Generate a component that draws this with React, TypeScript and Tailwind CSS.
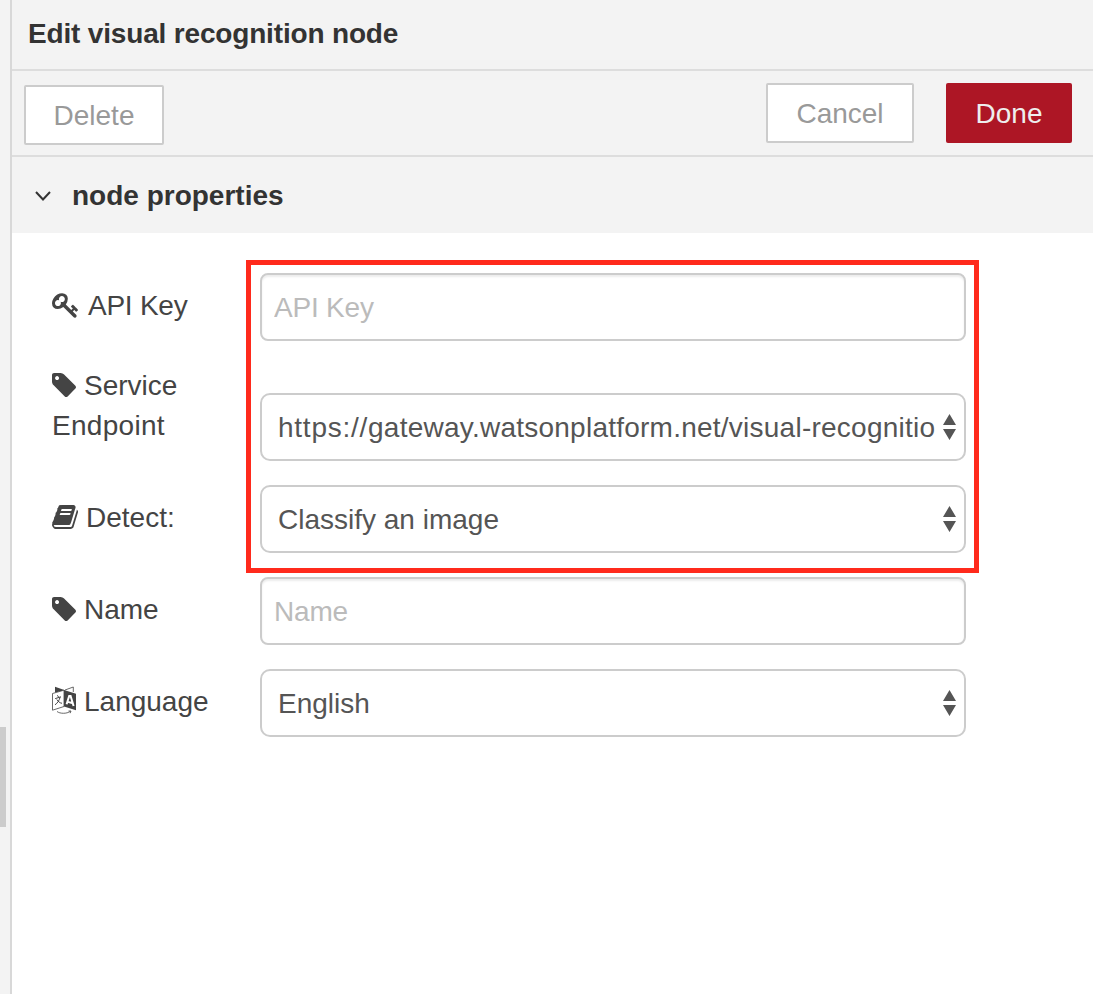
import type { ReactNode } from "react";

const KEY =
  "M832 512q0-80-56-136t-136-56-136 56-56 136q0 42 19 83-41-19-83-19-80 0-136 56t-56 136 56 136 136 56 136-56 56-136q0-42-19-83 41 19 83 19 80 0 136-56t56-136zm851 704q0 17-49 66t-66 49q-9 0-28.5-16t-36.5-33-38.5-40-24.5-26l-96 96 220 220q28 28 28 68 0 42-39 81t-81 39q-40 0-68-28l-671-671q-176 131-365 131-163 0-265.5-102.5t-102.5-265.5q0-160 95-313t248-248 313-95q163 0 265.5 102.5t102.5 265.5q0 189-131 365l355 355 96-96q-3-3-26-24.5t-40-38.5-33-36.5-16-28.5q0-17 49-66t66-49q13 0 23 10 6 6 46 44.5t82 79.5 86.5 86 73 78 28.5 41z";
const TAG =
  "M576 448q0-53-37.5-90.5t-90.5-37.5-90.5 37.5-37.5 90.5 37.5 90.5 90.5 37.5 90.5-37.5 37.5-90.5zm1067 576q0 53-37 90l-491 492q-39 37-91 37-53 0-90-37l-715-716q-38-37-64.5-101t-26.5-117v-416q0-52 38-90t90-38h416q53 0 117 26.5t102 64.5l715 714q37 39 37 91z";
const BOOK =
  "M1703 478q40 57 18 129l-275 906q-19 64-76.5 107.5t-122.5 43.5h-923q-77 0-148.5-53.5t-99.5-131.5q-24-67-2-127 0-4 3-27t4-37q1-8-3-21.5t-3-19.5q2-11 8-21t16.5-23.5 16.5-23.5q23-38 45-91.5t30-91.5q3-10 .5-30t-.5-28q3-11 17-28t17-23q21-36 42-92t25-90q1-9-2.5-32t.5-28q4-13 22-30.5t22-22.5q19-26 42.5-84.5t27.5-96.5q1-8-3-25.5t-2-26.5q2-8 9-18t18-23 17-21q8-12 16.5-30.5t15-35 16-36 19.5-32 26.5-23.5 36-11.5 47.5 5.5l-1 3q38-9 51-9h761q74 0 114 56t18 130l-274 906q-36 119-71.5 153.5t-128.5 34.5h-869q-27 0-38 15-11 16-1 43 24 70 144 70h923q29 0 56-15.5t35-41.5l300-987q7-22 5-57 38 15 59 43zm-1064 2q-4 13 2 22.5t20 9.5h608q13 0 25.5-9.5t16.5-22.5l21-64q4-13-2-22.5t-20-9.5h-608q-13 0-25.5 9.5t-16.5 22.5zm-83 256q-4 13 2 22.5t20 9.5h608q13 0 25.5-9.5t16.5-22.5l21-64q4-13-2-22.5t-20-9.5h-608q-13 0-25.5 9.5t-16.5 22.5z";

function Glyph({ path, box, className }: { path: string; box: string; className: string }) {
  return (
    <svg viewBox={box} className={`inline-block shrink-0 fill-current ${className}`}>
      <path d={path} />
    </svg>
  );
}

function LanguageGlyph() {
  return (
    <svg viewBox="0 0 24 28" className="mr-2 inline-block h-7 w-6 shrink-0 align-[-3px]">
      <path d="M3 .8 L13 4.3 L3 6.5Z" fill="#444" />
      <path d="M13 4 L21.3 1 V6" fill="none" stroke="#444" strokeWidth=".8" />
      <path d="M.5 7.5 L12 4.2 V20.5 L.5 24.2Z" fill="#fff" stroke="#444" strokeWidth=".8" />
      <path d="M12 4 L24 7.8 V24.3 L12 20.5Z" fill="#444" />
      <path d="M3.2 12.6 L9 10.8 M5.4 9.3 L6.5 11 M8 11.3 C7.5 14 5.5 17.2 3 18.8 M4.8 13.5 C6 15.5 8 17 10 17.3" fill="none" stroke="#444" strokeWidth="1" />
      <path d="M14.6 18.2 L17.2 10 H18.6 L21.6 20 M15.8 15.9 L20 17" fill="none" stroke="#fff" strokeWidth="2" />
      <path d="M5 25.5 C8 27.8 14.5 28 18.5 25.3 M16.5 25 L19 25 L18.2 27.2" fill="none" stroke="#444" strokeWidth=".8" />
    </svg>
  );
}

function Row({ label, children }: { label: ReactNode; children: ReactNode }) {
  return (
    <div className="flex items-end">
      <div className="w-[208px] shrink-0 pb-[15px] pt-px text-[#444]">{label}</div>
      {children}
    </div>
  );
}

function TextInput({ placeholder }: { placeholder: string }) {
  return (
    <input
      type="text"
      placeholder={placeholder}
      className="block h-[68px] w-[706px] rounded-lg border-2 border-[#ccc] bg-white px-3 pt-0.5 tracking-[-0.2px] text-[#555] shadow-[inset_0_2px_2px_rgba(0,0,0,0.075)] outline-none placeholder:text-[#bbb]"
    />
  );
}

function SelectBox({ children }: { children: ReactNode }) {
  return (
    <div className="flex h-[68px] w-[706px] items-center rounded-[10px] border-2 border-[#ccc] bg-white pl-4 pr-2 text-[#555]">
      <div className="w-[657px] shrink-0 whitespace-nowrap pt-0.5">{children}</div>
      <svg viewBox="0 0 13 26" className="ml-2 h-[26px] w-[13px] shrink-0 fill-[#555]">
        <path d="M6.5 0L13 11H0zM0 15H13L6.5 26z" />
      </svg>
    </div>
  );
}

export default function App() {
  return (
    <div className="flex h-[994px] w-[1093px] overflow-hidden bg-white font-['Liberation_Sans',Arial,sans-serif] text-[28px] leading-10">
      <div className="flex w-3 shrink-0 flex-col border-r-2 border-[#d8d8d8] bg-[#f3f3f3] pt-[727px]">
        <div className="h-[100px] w-1.5 bg-[#ccc]" />
      </div>
      <div className="flex min-w-0 flex-1 flex-col">
        <div className="h-[71px] border-b-2 border-[#ddd] bg-[#f3f3f3] pl-4 pt-3.5 font-bold tracking-[-0.17px] text-[#333]">
          Edit visual recognition node
        </div>
        <div className="flex h-[86px] items-start border-b-2 border-[#ddd] bg-[#f3f3f3] pl-3 pr-[21px] pt-3">
          <button className="mt-0.5 h-[60px] w-[140px] rounded-xs border-2 border-[#ccc] bg-white pt-0.5 text-[#999]">Delete</button>
          <button className="ml-auto h-[60px] w-[148px] rounded-xs border-2 border-[#ccc] bg-white pt-0.5 text-[#999]">Cancel</button>
          <button className="ml-8 h-[60px] w-[126px] rounded-xs bg-[#ad1625] pt-0.5 text-[#eee]">Done</button>
        </div>
        <div className="flex h-[76px] items-center bg-[#f3f3f3] pl-[23px] pt-0.5 font-bold text-[#333]">
          <svg viewBox="0 0 16 10" className="mr-[21px] h-[10px] w-4">
            <path d="M1 1L8 8.5L15 1" fill="none" stroke="#333" strokeWidth="2" />
          </svg>
          node properties
        </div>
        <div className="relative flex flex-col gap-6 pl-10 pt-10">
          <Row
            label={
              <>
                <Glyph path={KEY} box="0 128 1683 1600" className="mr-[10px] h-[25px] w-[26px] align-[-3px]" />
                <span className="tracking-[-0.25px]">API Key</span>
              </>
            }
          >
            <TextInput placeholder="API Key" />
          </Row>
          <Row
            label={
              <>
                <Glyph path={TAG} box="128 128 1516 1516" className="mr-2 h-6 w-6 align-[-2px]" />
                Service
                <br />
                <span className="tracking-[0.3px]">Endpoint</span>
              </>
            }
          >
            <SelectBox>
              <span className="tracking-[0.75px]">https://</span>
              <span className="tracking-[0.24px]">gateway.watsonplatform.net/visual-recognitio</span>
            </SelectBox>
          </Row>
          <Row label={<><Glyph path={BOOK} box="60 128 1666 1536" className="mr-2 h-6 w-[26px] align-[-2px]" />Detect:</>}>
            <SelectBox>Classify an image</SelectBox>
          </Row>
          <Row label={<><Glyph path={TAG} box="128 128 1516 1516" className="mr-2 h-6 w-6 align-[-2px]" />Name</>}>
            <TextInput placeholder="Name" />
          </Row>
          <Row label={<><LanguageGlyph />Language</>}>
            <SelectBox>English</SelectBox>
          </Row>
          <div className="pointer-events-none absolute left-[234px] top-[27px] h-[313px] w-[733px] border-5 border-[#ff2a1c]" />
        </div>
      </div>
    </div>
  );
}
